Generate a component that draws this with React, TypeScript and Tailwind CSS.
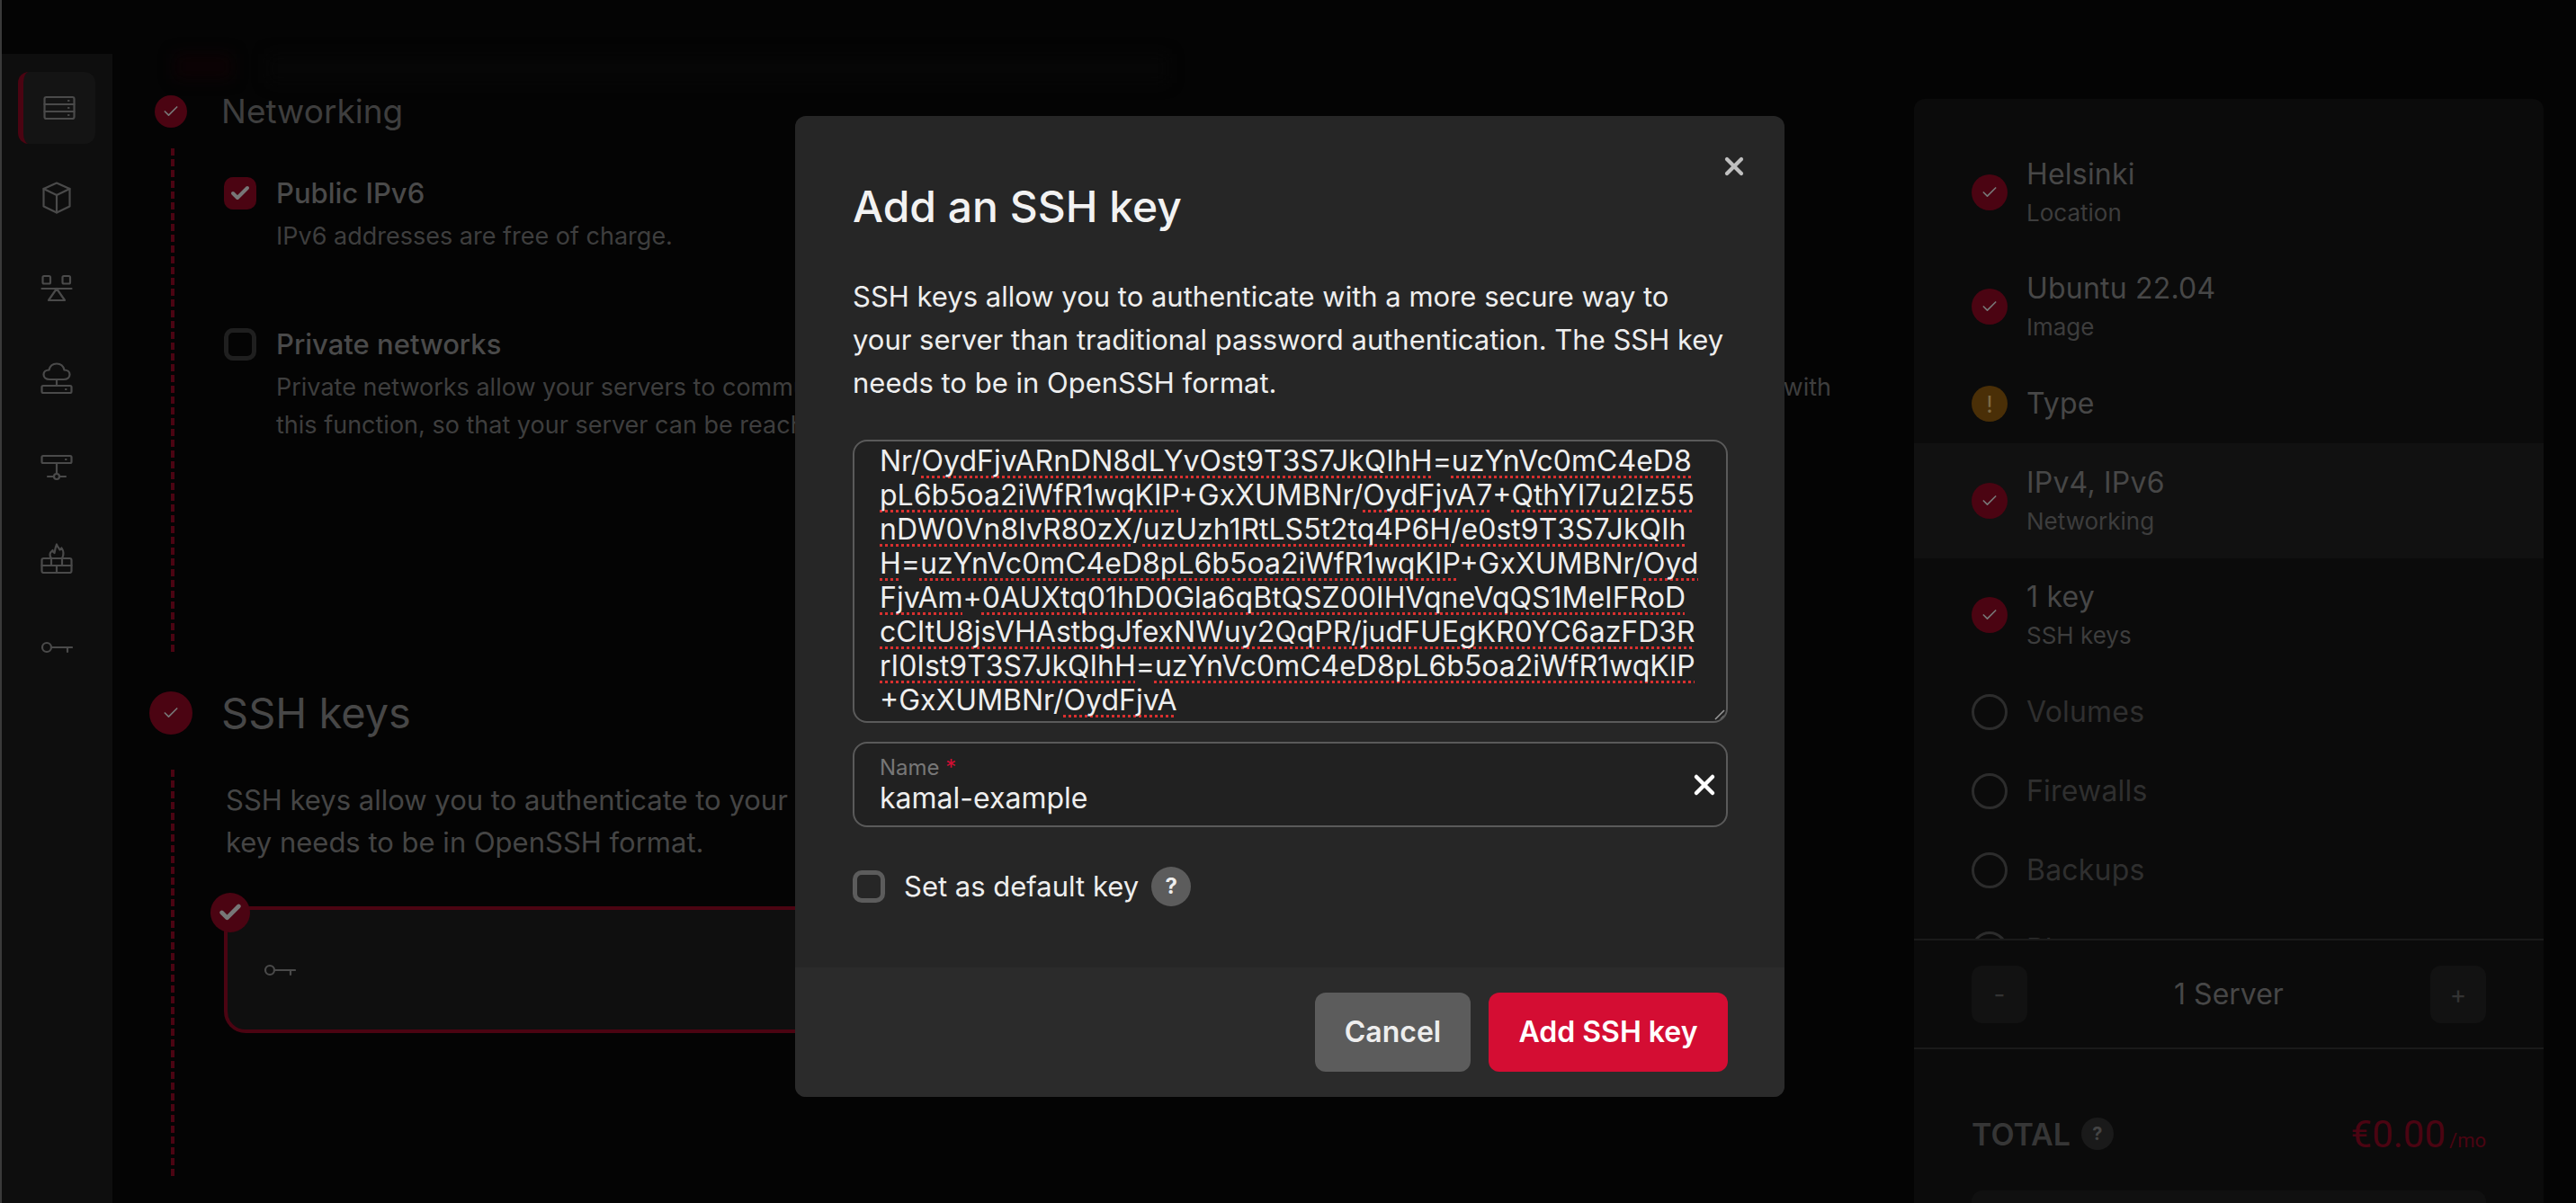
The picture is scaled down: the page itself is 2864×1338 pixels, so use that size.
import React from "react";
import { Check, X } from "lucide-react";

const keyLines: string[][] = [
  ["Nr/", "OydFjvARnDN8dLYvOst9T3S7JkQIhH", "=", "uzYnVc0mC4eD8"],
  ["", "pL6b5oa2iWfR1wqKIP", "+GxXUMBNr/", "OydFjvA7", "+", "QthYI7u2Iz55"],
  ["", "nDW0Vn8IvR80zX", "/", "uzUzh1RtLS5t2tq4P6H", "/", "e0st9T3S7JkQIh"],
  ["", "H", "=", "uzYnVc0mC4eD8pL6b5oa2iWfR1wqKIP", "+GxXUMBNr/", "Oyd"],
  ["", "FjvAm", "+", "0AUXtq01hD0Gla6qBtQSZ00IHVqneVqQS1MeIFRoD"],
  ["", "cCItU8jsVHAstbgJfexNWuy2QqPR/judFUEgKR0YC6azFD3R"],
  ["", "rI0Ist9T3S7JkQIhH", "=", "uzYnVc0mC4eD8pL6b5oa2iWfR1wqKIP"],
  ["+GxXUMBNr/", "OydFjvA"],
];

type Status = "done" | "warn" | "empty";

const summary: { title: string; sub?: string; status: Status; active?: boolean }[] = [
  { title: "Helsinki", sub: "Location", status: "done" },
  { title: "Ubuntu 22.04", sub: "Image", status: "done" },
  { title: "Type", status: "warn" },
  { title: "IPv4, IPv6", sub: "Networking", status: "done", active: true },
  { title: "1 key", sub: "SSH keys", status: "done" },
  { title: "Volumes", status: "empty" },
  { title: "Firewalls", status: "empty" },
  { title: "Backups", status: "empty" },
  { title: "Placement groups", status: "empty" },
];

const Icon = ({ children, className }: { children: React.ReactNode; className?: string }) => (
  <svg
    viewBox="0 0 36 36"
    fill="none"
    stroke="#4a4a4a"
    strokeWidth="2.2"
    strokeLinecap="round"
    strokeLinejoin="round"
    className={className ?? "w-9 h-9"}
  >
    {children}
  </svg>
);

const KeyIcon = ({ className }: { className?: string }) => (
  <Icon className={className}>
    <circle cx="7" cy="18" r="5" />
    <path d="M12 18h23M30 18v5" />
  </Icon>
);

const sidebarIcons = [
  <Icon key="servers">
    <rect x="1.5" y="6" width="33" height="24" rx="2" />
    <path d="M1.5 14h33M1.5 22h33M28 10h.5M28 18h.5M28 26h.5" />
  </Icon>,
  <Icon key="volumes">
    <path d="M18 1.5 32.5 8v19.5L18 34.5 3.5 27.5V8z" />
    <path d="M3.5 8 18 15l14.5-7M18 15v19.5" />
  </Icon>,
  <Icon key="balancer">
    <rect x="2.5" y="5" width="8.5" height="8.5" rx="1.5" />
    <rect x="24.5" y="5" width="8.5" height="8.5" rx="1.5" />
    <path d="M1.5 19h33M18 19 9 32h18z" />
  </Icon>,
  <Icon key="cloud">
    <path d="M10 20c-4 0-6.5-2.5-6.5-5.5S6 9.5 9.5 9.5C10.5 5 14 2.5 18 2.5s7.5 2.5 8.5 7c3.500 0 6 2 6 5s-2.500 5.500-6.500 5.500z" />
    <path d="M18 20v7" />
    <rect x="1.5" y="27" width="33" height="8" rx="1.5" />
    <path d="M28 31h.5" />
  </Icon>,
  <Icon key="network">
    <rect x="1.5" y="5" width="33" height="8" rx="1.5" />
    <path d="M28 9h.5M18 13v12M8 28h7M21 28h7" />
    <circle cx="18" cy="28" r="3" />
  </Icon>,
  <Icon key="firewall">
    <rect x="1.5" y="19" width="33" height="16" rx="2" />
    <path d="M1.5 27h33M12 19v8M24 19v8M18 27v8" />
    <path d="M12 19c-3-4-1-7 1.5-9 0 2 1 2.5 2 3 .5-3 1-6 2.5-9.5 1 3 2.5 4 3.5 6 1-.5 1.5-1 2-2 2 3 3 7 .5 11.5" />
  </Icon>,
  <KeyIcon key="keys" />,
];

const StepCircle = ({ size }: { size: "w-9 h-9" | "w-12 h-12" }) => (
  <div className={`${size} rounded-full bg-[#4b0412] flex items-center justify-center`}>
    <Check className="w-5 h-5 text-[#777777]" strokeWidth={2} />
  </div>
);

const DashLine = ({ className }: { className: string }) => (
  <div
    className={`w-1 ml-6 bg-[repeating-linear-gradient(to_bottom,#4b0412_0,#4b0412_8px,transparent_8px,transparent_12px)] ${className}`}
  />
);

const SummaryRow = ({ title, sub, status, active }: (typeof summary)[number]) => (
  <div
    className={`flex items-center gap-[21px] px-16 ${sub ? "h-[127.5px]" : "h-[88px]"} ${active ? "bg-[#111111]" : ""}`}
  >
    {status === "done" && (
      <div className="w-10 h-10 rounded-full bg-[#4b0412] flex items-center justify-center">
        <Check className="w-5 h-5 text-[#777777]" strokeWidth={2} />
      </div>
    )}
    {status === "warn" && (
      <div className="w-10 h-10 rounded-full bg-[#4a2f07] flex items-center justify-center text-[26px] text-[#7d6a45]">
        !
      </div>
    )}
    {status === "empty" && <div className="w-10 h-10 rounded-full border-[3px] border-[#2c2c2c]" />}
    {sub ? (
      <div className="flex flex-col gap-[6px]">
        <div className="text-[32px] leading-10 text-[#474747] tracking-[0.2px]">{title}</div>
        <div className="text-[26px] leading-[34px] text-[#3d3d3d]">{sub}</div>
      </div>
    ) : (
      <div className={`text-[32px] leading-10 tracking-[0.2px] ${status === "warn" ? "text-[#474747]" : "text-[#2f2f2f]"}`}>
        {title}
      </div>
    )}
  </div>
);

export default function App() {
  return (
    <div className="relative w-[2864px] h-[1338px] overflow-hidden flex bg-[#040404] border-l-2 border-[#3a3a3a] font-['Inter',sans-serif]">
      {/* sidebar */}
      <nav className="w-[123px] mt-[60px] shrink-0 bg-[#0e0e0e] pt-5 pl-[18px] flex flex-col gap-5">
        {sidebarIcons.map((icon, i) => (
          <div
            key={i}
            className={`w-[86px] h-20 rounded-xl flex items-center justify-center ${
              i === 0 ? "bg-[#141414] border-l-[6px] border-[#4b0412]" : ""
            }`}
          >
            {icon}
          </div>
        ))}
      </nav>

      {/* form column */}
      <main className="w-[2003px] shrink-0 pt-[60px] pl-[41px]">
        <div className="h-10 flex items-start gap-10 pl-7 blur-sm">
          <div className="w-16 h-7 bg-[#0c0204]" />
          <div className="w-[1000px] h-8 bg-[#060606]" />
        </div>

        <div className="flex items-center gap-[32px] h-12">
          <div className="w-12 flex justify-center">
            <StepCircle size="w-9 h-9" />
          </div>
          <h2 className="text-[37px] text-[#3e3e3e]">Networking</h2>
        </div>

        <div className="flex mt-[17px]">
          <div className="w-12 shrink-0">
            <DashLine className="h-[564px]" />
          </div>
          <div className="ml-[35px] pt-8 flex flex-col gap-[81px]">
            <div className="flex gap-[22px]">
              <div className="w-9 h-9 rounded-[10px] bg-[#4b0412] flex items-center justify-center">
                <Check className="w-6 h-6 text-[#777777]" strokeWidth={4} />
              </div>
              <div>
                <div className="text-[31px] leading-9 font-medium text-[#4a4a4a]">Public IPv6</div>
                <div className="mt-[9px] text-[27px] leading-[42px] text-[#3e3e3e]">IPv6 addresses are free of charge.</div>
              </div>
            </div>
            <div className="flex gap-[22px]">
              <div className="w-9 h-9 rounded-[10px] border-[5px] border-[#1f1f1f]" />
              <div>
                <div className="text-[31px] leading-9 font-medium text-[#4a4a4a]">Private networks</div>
                <div className="mt-[9px] w-[1729px] text-[27px] leading-[42px] text-[#3e3e3e]">
                  <div className="flex justify-between">
                    <span>Private networks allow your servers to communicate</span>
                    <span>with</span>
                  </div>
                  <div>this function, so that your server can be reached</div>
                </div>
              </div>
            </div>
          </div>
        </div>

        <div className="flex items-center gap-[32px] h-12 mt-10">
          <StepCircle size="w-12 h-12" />
          <h2 className="text-[47px] leading-[50px] text-[#474747]">SSH keys</h2>
        </div>

        <div className="flex mt-[39px]">
          <div className="w-12 shrink-0">
            <DashLine className="h-[452px]" />
          </div>
          <div className="ml-[35px] pt-[10px]">
            <p className="ml-[2px] text-[31px] leading-[47px] text-[#454545]">
              SSH keys allow you to authenticate to your
              <br />
              key needs to be in OpenSSH format.
            </p>
            <div className="relative mt-12 w-[1600px] h-[141px] rounded-tl-md rounded-bl-3xl rounded-r-3xl border-4 border-[#4b0412] bg-[#0f0f0f] flex items-center pl-10">
              <div className="absolute -top-[19px] -left-[19px] w-11 h-11 rounded-full bg-[#4b0412] flex items-center justify-center">
                <Check className="w-7 h-7 text-[#777777]" strokeWidth={4} />
              </div>
              <KeyIcon className="w-9 h-9" />
            </div>
          </div>
        </div>
      </main>

      {/* order summary */}
      <aside className="w-[700px] shrink-0 mt-[110px] rounded-t-xl bg-[#0b0b0b] flex flex-col">
        <div className="h-[934px] pt-10 overflow-hidden shrink-0">
          {summary.map((row) => (
            <SummaryRow key={row.title} {...row} />
          ))}
        </div>
        <div className="h-[123px] shrink-0 border-y-2 border-[#1a1a1a] px-16 flex items-center justify-between">
          <div className="w-[62px] h-16 rounded-xl bg-[#121212] flex items-center justify-center text-[28px] text-[#333333]">-</div>
          <div className="text-[32px] text-[#474747]">1 Server</div>
          <div className="w-[62px] h-16 rounded-xl bg-[#121212] flex items-center justify-center text-[28px] text-[#333333]">+</div>
        </div>
        <div className="mt-[72px] h-11 px-16 flex items-center justify-between shrink-0">
          <div className="flex items-center gap-3">
            <span className="text-[34px] font-semibold text-[#363636]">TOTAL</span>
            <span className="w-9 h-9 rounded-full bg-[#1a1a1a] flex items-center justify-center text-[20px] font-bold text-[#444444]">?</span>
          </div>
          <div className="text-[#4b0412] font-['Roboto',sans-serif]">
            <span className="text-[42px]">€0.00</span>
            <span className="text-[22px] ml-1">/mo</span>
          </div>
        </div>
        <div className="mt-[41px] mx-16 h-[60px] shrink-0 rounded-xl bg-[#101010]" />
      </aside>

      {/* dialog */}
      <div className="absolute left-[882px] top-[129px] w-[1100px] h-[1091px] rounded-xl bg-[#262626] flex flex-col">
        <button className="absolute top-10 right-10 text-[#c0c0c0]">
          <X className="w-8 h-8" strokeWidth={3.2} />
        </button>
        <div className="px-16 pt-[71px]">
          <h1 className="text-[48px] leading-[60px] font-medium text-[#f2f2f2]">Add an SSH key</h1>
          <p className="mt-[46px] text-[31px] leading-[48px] whitespace-nowrap text-[#eeeeee]">
            SSH keys allow you to authenticate with a more secure way to
            <br />
            your server than traditional password authentication. The SSH key
            <br />
            needs to be in OpenSSH format.
          </p>
          <div className="mt-[39px] relative h-[315px] w-[973px] overflow-hidden rounded-2xl border-2 border-[#5a5a5a] bg-[#212121] pl-7 pt-[3px] text-[32px] leading-[38px] text-[#eeeeee]">
            {keyLines.map((segments, i) => (
              <div key={i} className="whitespace-nowrap">
                {segments.map((text, j) =>
                  j % 2 === 1 ? (
                    <span
                      key={j}
                      className="underline decoration-dotted decoration-[#d9302f] decoration-[3px] underline-offset-[5px] [text-decoration-skip-ink:none]"
                    >
                      {text}
                    </span>
                  ) : (
                    <span key={j}>{text}</span>
                  )
                )}
              </div>
            ))}
            <svg viewBox="0 0 12 12" className="absolute right-[1px] bottom-[1px] w-3 h-3" stroke="#9a9a9a" strokeWidth="1.5">
              <path d="M1 11 11 1M7 11l4-4" />
            </svg>
          </div>
          <div className="mt-[21px] h-[95px] w-[973px] rounded-2xl border-2 border-[#5a5a5a] bg-[#212121] pl-7 pr-[6px] flex items-center justify-between">
            <div>
              <div className="text-[24px] leading-[30px] text-[#777777]">
                Name <span className="text-[#d40d33]">*</span>
              </div>
              <div className="text-[32px] leading-[38px] text-[#eeeeee]">kamal-example</div>
            </div>
            <X className="w-9 h-9 text-white" strokeWidth={3} />
          </div>
          <div className="mt-[44px] flex items-center h-11">
            <div className="w-9 h-9 rounded-[10px] border-[5px] border-[#5c5c5c]" />
            <span className="ml-[21px] text-[31px] text-[#eeeeee]">Set as default key</span>
            <span className="ml-[14px] w-11 h-11 rounded-full bg-[#5c5c5c] flex items-center justify-center text-[24px] font-bold text-[#eeeeee]">?</span>
          </div>
        </div>
        <div className="mt-auto h-[144px] rounded-b-xl bg-[#2b2b2b] px-[63px] flex items-center justify-end gap-5">
          <button className="h-[88px] w-[173px] rounded-xl bg-[#5c5c5c] text-[32px] font-semibold text-[#eeeeee]">Cancel</button>
          <button className="h-[88px] w-[266px] rounded-xl bg-[#d40d33] text-[32px] font-semibold text-white">Add SSH key</button>
        </div>
      </div>
    </div>
  );
}
